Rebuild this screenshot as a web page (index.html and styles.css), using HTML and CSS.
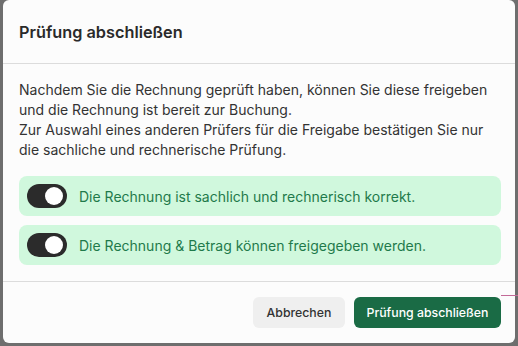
FILE: index.html
```html
<!DOCTYPE html>
<html lang="de">
<head>
<meta charset="utf-8">
<title>Prüfung abschließen</title>
<link rel="stylesheet" href="styles.css">
</head>
<body>
<div class="dialog">
  <div class="header">
    <h2 class="title">Prüfung abschließen</h2>
  </div>
  <div class="content">
    <p class="intro">Nachdem Sie die Rechnung geprüft haben, können Sie diese freigeben und die Rechnung ist bereit zur Buchung.<br>Zur Auswahl eines anderen Prüfers für die Freigabe bestätigen Sie nur die sachliche und rechnerische Prüfung.</p>
    <div class="checks">
      <label class="check">
        <span class="toggle"><span class="knob"></span></span>
        <span class="check-text">Die Rechnung ist sachlich und rechnerisch korrekt.</span>
      </label>
      <label class="check">
        <span class="toggle"><span class="knob"></span></span>
        <span class="check-text">Die Rechnung &amp; Betrag können freigegeben werden.</span>
      </label>
    </div>
  </div>
  <div class="footer">
    <button class="btn btn-secondary">Abbrechen</button>
    <button class="btn btn-primary">Prüfung abschließen</button>
  </div>
</div>
<div class="behind-line"></div>
</body>
</html>
```

FILE: styles.css
```css
html, body {
  margin: 0;
  padding: 0;
}
body {
  background: #6e6e6e;
  width: 518px;
  height: 346px;
  overflow: hidden;
  position: relative;
  font-family: Inter, "Noto Sans", sans-serif;
  color: #333;
}
.dialog {
  margin-left: 3px;
  width: 512px;
  height: 343px;
  background: #fcfcfc;
  border-radius: 6px;
  display: flex;
  flex-direction: column;
  box-sizing: border-box;
}
.header {
  height: 63px;
  border-bottom: 1px solid #dcdcdc;
  display: flex;
  align-items: center;
  padding: 0 16px;
  flex: none;
}
.title {
  margin: 0;
  font-size: 16.3px;
  font-weight: 600;
  color: #2a2a2a;
}
.content {
  padding: 16px 14px 16px 16px;
  border-bottom: 1px solid #dcdcdc;
  flex: none;
}
.intro {
  margin: 0 0 16px;
  font-size: 14px;
  line-height: 20px;
  color: #333;
}
.checks {
  display: flex;
  flex-direction: column;
  gap: 9px;
}
.check {
  display: flex;
  align-items: center;
  gap: 12px;
  height: 40px;
  padding: 0 8px;
  background: #d0f8dd;
  border-radius: 8px;
}
.toggle {
  width: 40px;
  height: 24px;
  border-radius: 12px;
  background: #2b2b2b;
  display: flex;
  align-items: center;
  justify-content: flex-end;
  padding: 0 4px;
  box-sizing: border-box;
  flex: none;
}
.knob {
  width: 18px;
  height: 18px;
  border-radius: 50%;
  background: #fff;
}
.check-text {
  font-size: 14px;
  color: #1f7a4b;
}
.footer {
  flex: 1;
  display: flex;
  justify-content: flex-end;
  align-items: flex-start;
  gap: 9px;
  padding: 15px 14px 0 16px;
}
.btn {
  height: 31px;
  border: none;
  border-radius: 6px;
  font-family: Inter, "Noto Sans", sans-serif;
  font-size: 12.3px;
  font-weight: 500;
  padding: 0;
  white-space: nowrap;
  cursor: pointer;
}
.btn-secondary {
  background: #efefef;
  color: #333;
  width: 92px;
}
.btn-primary {
  background: #1a6b45;
  color: #fff;
  width: 147px;
}
.behind-line {
  position: absolute;
  left: 501px;
  top: 295px;
  width: 17px;
  height: 1px;
  background: #c36a98;
}
```
